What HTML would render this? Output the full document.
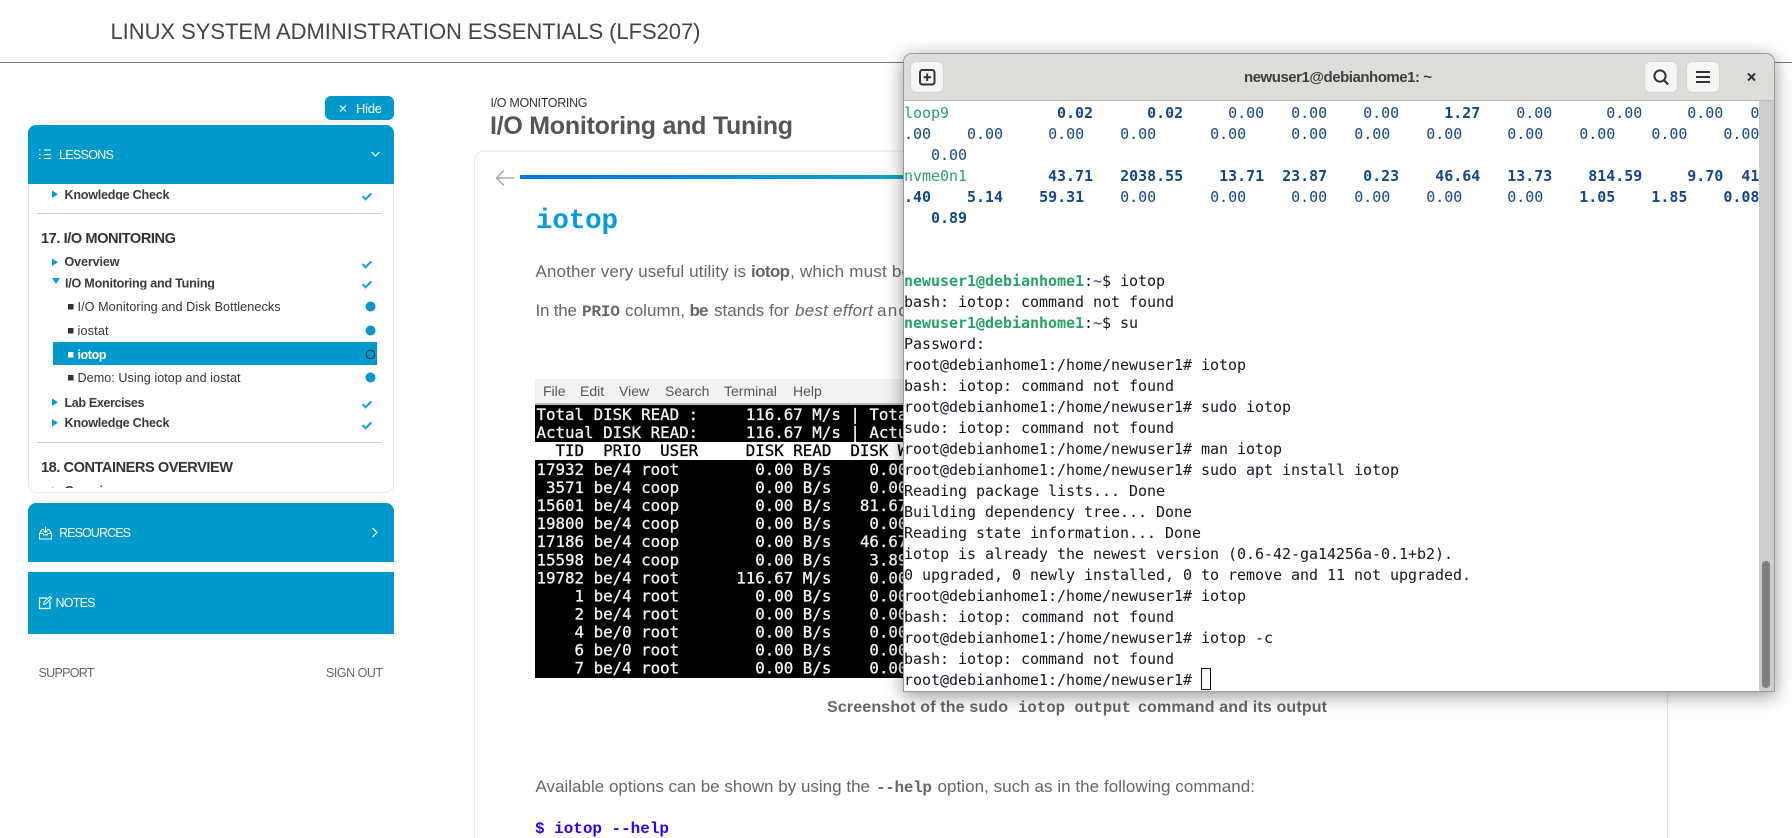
<!DOCTYPE html>
<html lang="en">
<head>
<meta charset="utf-8">
<title>I/O Monitoring and Tuning</title>
<style>
html,body{margin:0;padding:0;width:1792px;height:838px;overflow:hidden;background:#fff}
#page{position:absolute;left:0;top:0}
text{font-family:"Liberation Sans",sans-serif;white-space:pre}
.m{font-family:"Liberation Mono",monospace}
.it{font-size:12.6px;font-weight:700;fill:#3a3a3a}
.sub{font-size:12.6px;fill:#333}
.h{font-size:14.6px;font-weight:700;fill:#333}
.w{font-size:12.5px;fill:#fff}
.p{font-size:17px;fill:#666}
.p.m{font-size:16px}
.b{font-weight:700}
.scr text{font-family:"DejaVu Sans Mono",monospace;font-size:15.8px;fill:#f4f4f4;stroke:#f4f4f4;stroke-width:.3}
.menu text{font-size:14px;fill:#555}
#term{position:absolute;left:903px;top:53px;width:870px;height:637px;background:#fff;border:1px solid #999;border-radius:9px 9px 0 0;box-shadow:0 4px 18px rgba(0,0,0,.42);overflow:hidden}
#bar{position:absolute;left:0;top:0;width:870px;height:46px;background:#deddda;border-bottom:1px solid #bdbbb7;box-sizing:content-box}
.btn{position:absolute;top:7px;width:32px;height:30px;background:#f6f5f4;border:1px solid #d6d4d0;border-radius:6px}
#screen{position:absolute;left:0;top:47px;width:870px;height:590px;background:#fff;overflow:hidden}
#screen pre{position:absolute;left:0;top:2px;margin:0;font:15px/21px "DejaVu Sans Mono",monospace;letter-spacing:-.03px;color:#171421}
#screen pre b{color:#12488b;font-weight:700}
#screen pre i{color:#12488b;font-style:normal}
#screen pre u{color:#26a269;text-decoration:none}
#screen pre em{color:#26a269;font-style:normal;font-weight:700}
#track{position:absolute;right:0;top:0;width:15px;height:590px;background:#cdcdcd}
#thumb{position:absolute;left:3px;top:460px;width:8px;height:127px;border-radius:4px;background:#7d8080}
#cursor{position:absolute;left:297px;top:567px;width:8px;height:20px;border:1.5px solid #111}
</style>
</head>
<body>
<svg id="page" width="1792" height="838" viewBox="0 0 1792 838" xmlns="http://www.w3.org/2000/svg">
<defs>
<clipPath id="c1"><rect x="29" y="184" width="364" height="304"/></clipPath>
<clipPath id="k1"><rect x="60" y="180" width="200" height="20"/></clipPath>
<clipPath id="k2"><rect x="60" y="270" width="200" height="19.5"/></clipPath>
<clipPath id="k3"><rect x="60" y="410" width="200" height="18.5"/></clipPath>
<linearGradient id="g1" x1="0" x2="1" y1="0" y2="0"><stop offset="0" stop-color="#0077dc"/><stop offset="1" stop-color="#12a3c8"/></linearGradient>
</defs>

<!-- top bar -->
<text x="110.500" y="39" font-size="22" fill="#444" textLength="590">LINUX SYSTEM ADMINISTRATION ESSENTIALS (LFS207)</text>
<rect x="0" y="62" width="1792" height="1" fill="#777"/>

<!-- hide -->
<rect x="325" y="96" width="69" height="24" rx="6" fill="#0099cc"/>
<path d="M340 105.500l6 6M346 105.500l-6 6" stroke="#fff" stroke-width="1.100" fill="none"/>
<text x="356" y="113" font-size="13" fill="#fff" textLength="26">Hide</text>

<!-- lessons panel -->
<rect x="28.500" y="150" width="365" height="342.500" rx="8" fill="#fff" stroke="#e6e6e6"/>
<path d="M28 184V133a8 8 0 0 1 8-8h350a8 8 0 0 1 8 8v51z" fill="#0099cc"/>
<path d="M44 150h7M44 154.500h7M44 158.500h7M39 150h1.500M39 154.500h1.500M39 158.500h1.500" stroke="#fff" stroke-width="1" fill="none"/>
<text class="w" x="59" y="159" textLength="55">LESSONS</text>
<path d="M371.500 152l4 4 4-4" stroke="#fff" stroke-width="1.200" fill="none"/>

<g clip-path="url(#c1)">
<path d="M52 190.500l6 3.800-6 3.700z" fill="#0d9ad2"/>
<text class="it" x="64.500" y="199" textLength="105" clip-path="url(#k1)">Knowledge Check</text>
<path d="M362.500 196l3 3.300 5.800-5.800" stroke="#149fd6" stroke-width="2" fill="none"/>
<rect x="37" y="213" width="344" height="1" fill="#ccc"/>
<text class="h" x="41" y="243" textLength="135">17. I/O MONITORING</text>

<path d="M52 258.500l6 3.800-6 3.700z" fill="#0d9ad2"/>
<text class="it" x="64.500" y="266" textLength="55">Overview</text>
<path d="M362.500 264l3 3.300 5.800-5.800" stroke="#149fd6" stroke-width="2" fill="none"/>

<path d="M52 278h8l-4 6z" fill="#0d9ad2"/>
<text class="it" x="65" y="287.500" textLength="150" clip-path="url(#k2)">I/O Monitoring and Tuning</text>
<path d="M362.500 284l3 3.300 5.800-5.800" stroke="#149fd6" stroke-width="2" fill="none"/>

<rect x="68" y="304" width="5.500" height="5.500" fill="#333"/>
<text class="sub" x="77.500" y="311" textLength="203">I/O Monitoring and Disk Bottlenecks</text>
<circle cx="370.500" cy="306.500" r="5" fill="#0a97cf"/>

<rect x="68" y="328" width="5.500" height="5.500" fill="#333"/>
<text class="sub" x="77.500" y="335" textLength="31">iostat</text>
<circle cx="370.500" cy="330.500" r="5" fill="#0a97cf"/>

<rect x="53" y="342" width="324" height="23" fill="#0099cc"/>
<rect x="68" y="352" width="5.500" height="5.500" fill="#fff"/>
<text class="sub" x="77.500" y="359" textLength="29" style="fill:#fff;font-weight:700">iotop</text>
<circle cx="370.500" cy="354.500" r="4.200" fill="none" stroke="#333" stroke-width="1"/>

<rect x="68" y="375" width="5.500" height="5.500" fill="#333"/>
<text class="sub" x="77.500" y="382" textLength="163">Demo: Using iotop and iostat</text>
<circle cx="370.500" cy="377.500" r="5" fill="#0a97cf"/>

<path d="M52 398.500l6 3.800-6 3.700z" fill="#0d9ad2"/>
<text class="it" x="64.500" y="407" textLength="80">Lab Exercises</text>
<path d="M362.500 404l3 3.300 5.800-5.800" stroke="#149fd6" stroke-width="2" fill="none"/>

<path d="M52 419l6 3.800-6 3.700z" fill="#0d9ad2"/>
<text class="it" x="64.500" y="427" textLength="105" clip-path="url(#k3)">Knowledge Check</text>
<path d="M362.500 425l3 3.300 5.800-5.800" stroke="#149fd6" stroke-width="2" fill="none"/>

<rect x="37" y="442" width="344" height="1" fill="#ccc"/>
<text class="h" x="41" y="472" textLength="192">18. CONTAINERS OVERVIEW</text>
<path d="M52 487l6 3.800-6 3.700z" fill="#0d9ad2"/>
<text class="it" x="64.500" y="495" textLength="55">Overview</text>
</g>

<!-- resources -->
<path d="M28 562V511a8 8 0 0 1 8-8h350a8 8 0 0 1 8 8v51z" fill="#0099cc"/>
<path d="M39.500 533.500l2.500-4h2M51.500 533.500l-2.500-4h-2M39.500 533.500v5.500h12v-5.500h-3.500l-1 1.500h-3l-1-1.500z" stroke="#fff" stroke-width="1.100" fill="none"/>
<path d="M45.500 526.500v6M43.500 530.500l2 2 2-2" stroke="#fff" stroke-width="1.100" fill="none"/>
<text class="w" x="59" y="537" textLength="72">RESOURCES</text>
<path d="M372.500 528l4.500 4.500-4.500 4.500" stroke="#fff" stroke-width="1.200" fill="none"/>

<!-- notes -->
<rect x="28" y="572" width="366" height="62" fill="#0099cc"/>
<path d="M47 598h-7.500v10.500h10.500v-7" stroke="#fff" stroke-width="1.200" fill="none"/>
<path d="M43.500 604.500l.7-2.800 5.800-5.200 1.500 1.600-5.500 5.600z" stroke="#fff" stroke-width="1" fill="none"/>
<text class="w" x="55.500" y="607" textLength="40">NOTES</text>

<text x="38.500" y="677" font-size="12.500" fill="#666" textLength="56">SUPPORT</text>
<text x="326" y="677" font-size="12.500" fill="#666" textLength="57">SIGN OUT</text>

<!-- content header -->
<text x="490.500" y="107" font-size="12.500" fill="#333" textLength="97">I/O MONITORING</text>
<text x="490" y="134" font-size="25" font-weight="700" fill="#555" textLength="303">I/O Monitoring and Tuning</text>

<!-- card -->
<path d="M474.500 850V161a10 10 0 0 1 10-10H1657a10 10 0 0 1 10.500 10V850" fill="#fff" stroke="#e6e6e6"/>
<path d="M514 178H497M504 170.500l-7.500 7.500 7.500 7.500" stroke="#aaa" stroke-width="1.500" fill="none"/>
<rect x="520" y="175" width="400" height="4" fill="url(#g1)"/>

<text class="m b" x="536" y="228" font-size="27.500" fill="#009cdc" textLength="82">iotop</text>

<text class="p" x="535.500" y="277" textLength="210.500">Another very useful utility is</text>
<text class="p b" x="751" y="277" textLength="39">iotop</text>
<text class="p" x="790" y="277" textLength="121">, which must be</text>

<text class="p" x="535.500" y="316" textLength="41.500">In the</text>
<text class="p m b" x="582" y="316" textLength="38">PRIO</text>
<text class="p" x="625" y="316" textLength="60">column,</text>
<text class="p b" x="689.500" y="316" textLength="19">be</text>
<text class="p" x="714" y="316" textLength="75">stands for</text>
<text class="p" x="795" y="316" textLength="78" font-style="italic">best effort</text>
<text class="p" x="877" y="316" textLength="31">and</text>

<!-- screenshot -->
<g class="menu">
<rect x="535" y="379" width="600" height="26" fill="#f2f2f0"/>
<rect x="535" y="403" width="600" height="2" fill="#bbb"/>
<text x="543" y="396">File</text>
<text x="580" y="396">Edit</text>
<text x="619" y="396">View</text>
<text x="665" y="396">Search</text>
<text x="724" y="396">Terminal</text>
<text x="793" y="396">Help</text>
</g>
<rect x="535" y="405" width="600" height="273" fill="#000"/>
<rect x="535" y="442" width="600" height="18" fill="#fff"/>
<g class="scr">
<text x="536.500" y="420">Total DISK READ :     116.67 M/s | Total DISK WRITE</text>
<text x="536.500" y="438">Actual DISK READ:     116.67 M/s | Actual DISK WRITE</text>
<text x="536.500" y="456" style="fill:#000;stroke:#000">  TID  PRIO  USER     DISK READ  DISK WRITE</text>
<text x="536.500" y="475">17932 be/4 root        0.00 B/s    0.00 B/s</text>
<text x="536.500" y="493"> 3571 be/4 coop        0.00 B/s    0.00 B/s</text>
<text x="536.500" y="511">15601 be/4 coop        0.00 B/s   81.67 B/s</text>
<text x="536.500" y="529">19800 be/4 coop        0.00 B/s    0.00 B/s</text>
<text x="536.500" y="547">17186 be/4 coop        0.00 B/s   46.67 B/s</text>
<text x="536.500" y="565.400">15598 be/4 coop        0.00 B/s    3.89 B/s</text>
<text x="536.500" y="583.400">19782 be/4 root      116.67 M/s    0.00 B/s</text>
<text x="536.500" y="601.400">    1 be/4 root        0.00 B/s    0.00 B/s</text>
<text x="536.500" y="619.500">    2 be/4 root        0.00 B/s    0.00 B/s</text>
<text x="536.500" y="637.500">    4 be/0 root        0.00 B/s    0.00 B/s</text>
<text x="536.500" y="655.600">    6 be/0 root        0.00 B/s    0.00 B/s</text>
<text x="536.500" y="673.700">    7 be/4 root        0.00 B/s    0.00 B/s</text>
</g>

<text x="827" y="712" font-size="16" font-weight="700" fill="#666" textLength="181">Screenshot of the sudo</text>
<text class="m b" x="1018" y="712" font-size="15.700" fill="#666" textLength="113">iotop output</text>
<text x="1138" y="712" font-size="16" font-weight="700" fill="#666" textLength="189">command and its output</text>

<text class="p" x="535.500" y="792" textLength="334.500">Available options can be shown by using the</text>
<text class="p m b" x="876" y="792" textLength="56">--help</text>
<text class="p" x="937.500" y="792" textLength="317.500">option, such as in the following command:</text>

<text class="m b" x="535" y="833" font-size="16" fill="#2a00ff" textLength="134">$ iotop --help</text>
</svg>

<div id="term">
  <div id="bar">
    <div class="btn" style="left:6px"></div>
    <div class="btn" style="left:740px"></div>
    <div class="btn" style="left:782px"></div>
    <svg width="870" height="46" viewBox="904 54 870 46" style="position:absolute;left:0;top:0">
      <text x="1244" y="82" font-size="15" font-weight="700" fill="#3d3d3d" textLength="188">newuser1@debianhome1: ~</text>
      <rect x="920" y="70" width="14.500" height="14.500" rx="2.500" fill="none" stroke="#2e3436" stroke-width="2"/>
      <path d="M927.200 73.500v7.500M923.500 77.200h7.500" stroke="#2e3436" stroke-width="2" fill="none"/>
      <circle cx="1660" cy="76" r="5.600" fill="none" stroke="#2e3436" stroke-width="2"/>
      <path d="M1664 80.300l4.200 4.200" stroke="#2e3436" stroke-width="2.200" fill="none"/>
      <path d="M1696 72h14M1696 77h14M1696 82h14" stroke="#2e3436" stroke-width="2" fill="none"/>
      <path d="M1748 73.500l7 7M1755 73.500l-7 7" stroke="#2e3436" stroke-width="2" fill="none"/>
    </svg>
  </div>
  <div id="screen">
<pre><u>loop9</u>            <b>0.02</b>      <b>0.02</b>     <i>0.00</i>   <i>0.00</i>    <i>0.00</i>     <b>1.27</b>    <i>0.00</i>      <i>0.00</i>     <i>0.00</i>   <i>0</i>
<i>.00</i>    <i>0.00</i>     <i>0.00</i>    <i>0.00</i>      <i>0.00</i>     <i>0.00</i>   <i>0.00</i>    <i>0.00</i>     <i>0.00</i>    <i>0.00</i>    <i>0.00</i>    <i>0.00</i>
   <i>0.00</i>
<u>nvme0n1</u>         <b>43.71</b>   <b>2038.55</b>    <b>13.71</b>  <b>23.87</b>    <b>0.23</b>    <b>46.64</b>   <b>13.73</b>    <b>814.59</b>     <b>9.70</b>  <b>41</b>
<b>.40</b>    <b>5.14</b>    <b>59.31</b>    <i>0.00</i>      <i>0.00</i>     <i>0.00</i>   <i>0.00</i>    <i>0.00</i>     <i>0.00</i>    <b>1.05</b>    <b>1.85</b>    <b>0.08</b>
   <b>0.89</b>


<em>newuser1@debianhome1</em>:<i>~</i>$ iotop
bash: iotop: command not found
<em>newuser1@debianhome1</em>:<i>~</i>$ su
Password:
root@debianhome1:/home/newuser1# iotop
bash: iotop: command not found
root@debianhome1:/home/newuser1# sudo iotop
sudo: iotop: command not found
root@debianhome1:/home/newuser1# man iotop
root@debianhome1:/home/newuser1# sudo apt install iotop
Reading package lists... Done
Building dependency tree... Done
Reading state information... Done
iotop is already the newest version (0.6-42-ga14256a-0.1+b2).
0 upgraded, 0 newly installed, 0 to remove and 11 not upgraded.
root@debianhome1:/home/newuser1# iotop
bash: iotop: command not found
root@debianhome1:/home/newuser1# iotop -c
bash: iotop: command not found
root@debianhome1:/home/newuser1# </pre>
    <div id="cursor"></div>
    <div id="track"><div id="thumb"></div></div>
  </div>
</div>
</body>
</html>
